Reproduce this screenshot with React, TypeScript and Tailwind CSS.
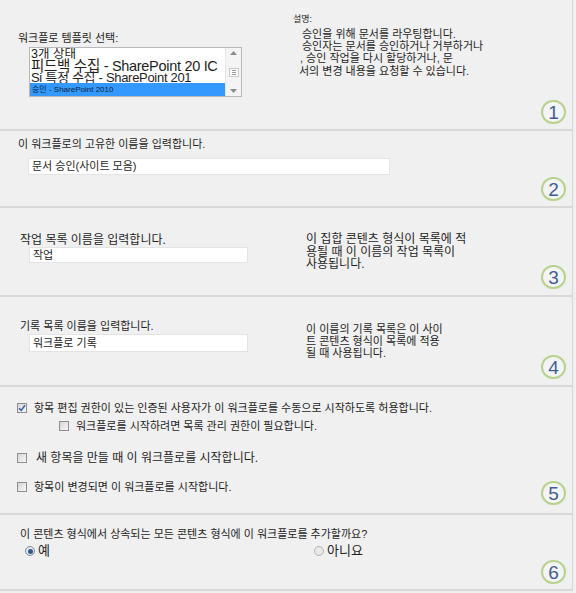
import type { ReactNode } from 'react';

function Step({ n, className }: { n: number; className: string }) {
  return (
    <div
      className={`absolute right-[6px] w-[25px] h-[24px] rounded-full border-2 border-[#b8d18e] bg-[#f4f4f4] flex items-center justify-center text-[19px] leading-none text-[#3f5e95] font-['Liberation_Sans',sans-serif] ${className}`}
    >
      {n}
    </div>
  );
}

function Checkbox({ checked }: { checked?: boolean }) {
  return (
    <span className="w-[10px] h-[10px] border border-[#8e8e8e] bg-gradient-to-br from-[#d6d6d6] to-[#f8f8f8] flex items-center justify-center shrink-0">
      {checked && (
        <svg width="8" height="8" viewBox="0 0 8 8">
          <path d="M1 4.2 L3.2 6.4 L7 1.2" fill="none" stroke="#3a5d9c" strokeWidth="1.5" />
        </svg>
      )}
    </span>
  );
}

function Radio({ checked }: { checked?: boolean }) {
  return (
    <span
      className={`w-[10px] h-[10px] rounded-full border flex items-center justify-center shrink-0 ${
        checked ? 'border-[#7d8a99] bg-[#e6e6e6]' : 'border-[#b3b3b3] bg-[#e9e9e9]'
      }`}
    >
      {checked && <span className="w-[5px] h-[5px] rounded-full bg-[#2d5b92]" />}
    </span>
  );
}

function TextBox({ value, className }: { value: string; className: string }) {
  return (
    <div className={`bg-white border border-[#e3e3e3] text-[11px] leading-none flex items-center pl-[3px] ${className}`}>
      {value}
    </div>
  );
}

function Section({ className, children }: { className: string; children: ReactNode }) {
  return <section className={`relative border-b-2 border-[#d9d9d9] ${className}`}>{children}</section>;
}

function ListBox() {
  return (
    <div className="ml-[11px] mt-[2px] w-[213px] h-[50px] bg-white border border-[#b9b9b9] flex overflow-hidden">
      <div className="flex-1 flex flex-col">
        <div className="h-[11px] leading-[12px] text-[12.5px] pl-[1px]">3개 상태</div>
        <div className="h-[13px] leading-[14px] text-[14.5px] pl-[1px] tracking-[-0.3px] whitespace-nowrap">
          피드백 수집 - SharePoint 20 IC
        </div>
        <div className="h-[11px] leading-[12px] text-[13px] pl-[1px] tracking-[-0.3px] whitespace-nowrap">
          Si 특정 수집 - SharePoint 201
        </div>
        <div className="h-[13px] bg-[#3399ff] text-[8px] leading-[13px] pl-[2px] text-[#0e1f3d]">승인 - SharePoint 2010</div>
      </div>
      <div className="w-[16px] bg-[#f4f4f4] border-l border-[#e6e6e6] flex flex-col items-center justify-between py-[3px]">
        <svg width="7" height="4" viewBox="0 0 7 4">
          <path d="M0 4 L3.5 0 L7 4 Z" fill="#8a8a8a" />
        </svg>
        <span className="w-[10px] h-[9px] border border-[#c8c8c8] bg-[#fafafa] flex flex-col justify-center gap-[1px] px-[2px]">
          <span className="h-px bg-[#9a9a9a]" />
          <span className="h-px bg-[#9a9a9a]" />
          <span className="h-px bg-[#9a9a9a]" />
        </span>
        <svg width="7" height="4" viewBox="0 0 7 4">
          <path d="M0 0 L7 0 L3.5 4 Z" fill="#8a8a8a" />
        </svg>
      </div>
    </div>
  );
}

export default function App() {
  return (
    <div className="w-[576px] h-[593px] bg-[#f0f0f0] text-[#1e1e1e] font-['Liberation_Sans','Noto_Sans_CJK_KR',sans-serif]">
      <div className="w-[573px] h-[591px] border-r border-[#d6d6d6]">
        {/* 1: template */}
        <Section className="h-[131px] flex">
          <div className="w-[293px] pl-[18px] pt-[31px]">
            <div className="text-[11px] leading-[14px]">워크플로 템플릿 선택:</div>
            <ListBox />
          </div>
          <div className="pt-[13px] text-[11px]">
            <div className="text-[9px] leading-[12px]">설명:</div>
            <div className="mt-[3px] pl-[9px] leading-[12px]">승인을 위해 문서를 라우팅합니다.</div>
            <div className="pl-[9px] leading-[12px]">승인자는 문서를 승인하거나 거부하거나</div>
            <div className="pl-[7px] leading-[12px]">, 승인 작업을 다시 할당하거나, 문</div>
            <div className="mt-[1px] pl-[6px] leading-[12px]">서의 변경 내용을 요청할 수 있습니다.</div>
          </div>
          <Step n={1} className="bottom-[5px]" />
        </Section>

        {/* 2: name */}
        <Section className="h-[77px] pl-[18px] pt-[6px]">
          <div className="text-[11px] leading-[14px]">이 워크플로의 고유한 이름을 입력합니다.</div>
          <TextBox value="문서 승인(사이트 모음)" className="mt-[7px] ml-[10px] w-[362px] h-[17px]" />
          <Step n={2} className="bottom-[5px]" />
        </Section>

        {/* 3: task list */}
        <Section className="h-[89px] flex">
          <div className="w-[306px] pl-[20px] pt-[25px]">
            <div className="text-[12px] leading-[14px]">작업 목록 이름을 입력합니다.</div>
            <TextBox value="작업" className="ml-[9px] w-[219px] h-[16px]" />
          </div>
          <div className="pt-[25px] text-[12px] leading-[12.5px]">
            <div>이 집합 콘텐츠 형식이 목록에 적</div>
            <div>용될 때 이 이름의 작업 목록이</div>
            <div>사용됩니다.</div>
          </div>
          <Step n={3} className="bottom-[6px]" />
        </Section>

        {/* 4: history list */}
        <Section className="h-[90px] flex">
          <div className="w-[306px] pl-[20px] pt-[22px]">
            <div className="text-[11px] leading-[14px]">기록 목록 이름을 입력합니다.</div>
            <TextBox value="워크플로 기록" className="mt-[1px] ml-[9px] w-[219px] h-[18px]" />
          </div>
          <div className="pt-[26px] text-[11px] leading-[12px]">
            <div>이 이름의 기록 목록은 이 사이</div>
            <div>트 콘텐츠 형식이 목록에 적용</div>
            <div>될 때 사용됩니다.</div>
          </div>
          <Step n={4} className="bottom-[6px]" />
        </Section>

        {/* 5: start options */}
        <Section className="h-[128px] pt-[12px] text-[11px]">
          <div className="h-[18px] flex items-center gap-[7px] pl-[17px]">
            <Checkbox checked />
            <span>항목 편집 권한이 있는 인증된 사용자가 이 워크플로를 수동으로 시작하도록 허용합니다.</span>
          </div>
          <div className="h-[18px] flex items-center gap-[7px] pl-[59px]">
            <Checkbox />
            <span>워크플로를 시작하려면 목록 관리 권한이 필요합니다.</span>
          </div>
          <div className="mt-[14px] h-[18px] flex items-center gap-[9px] pl-[17px]">
            <Checkbox />
            <span className="text-[12px]">새 항목을 만들 때 이 워크플로를 시작합니다.</span>
          </div>
          <div className="mt-[11px] h-[18px] flex items-center gap-[7px] pl-[17px]">
            <Checkbox />
            <span>항목이 변경되면 이 워크플로를 시작합니다.</span>
          </div>
          <Step n={5} className="bottom-[8px]" />
        </Section>

        {/* 6: inherit */}
        <Section className="h-[76px] pl-[20px] pt-[12px]">
          <div className="text-[11px] leading-[14px]">이 콘텐츠 형식에서 상속되는 모든 콘텐츠 형식에 이 워크플로를 추가할까요?</div>
          <div className="mt-[2px] h-[16px] flex items-center text-[13px]">
            <div className="w-[294px] pl-[5px] flex items-center gap-[3px]">
              <Radio checked />
              <span>예</span>
            </div>
            <div className="flex items-center gap-[3px]">
              <Radio />
              <span>아니요</span>
            </div>
          </div>
          <Step n={6} className="bottom-[5px]" />
        </Section>
      </div>
    </div>
  );
}
